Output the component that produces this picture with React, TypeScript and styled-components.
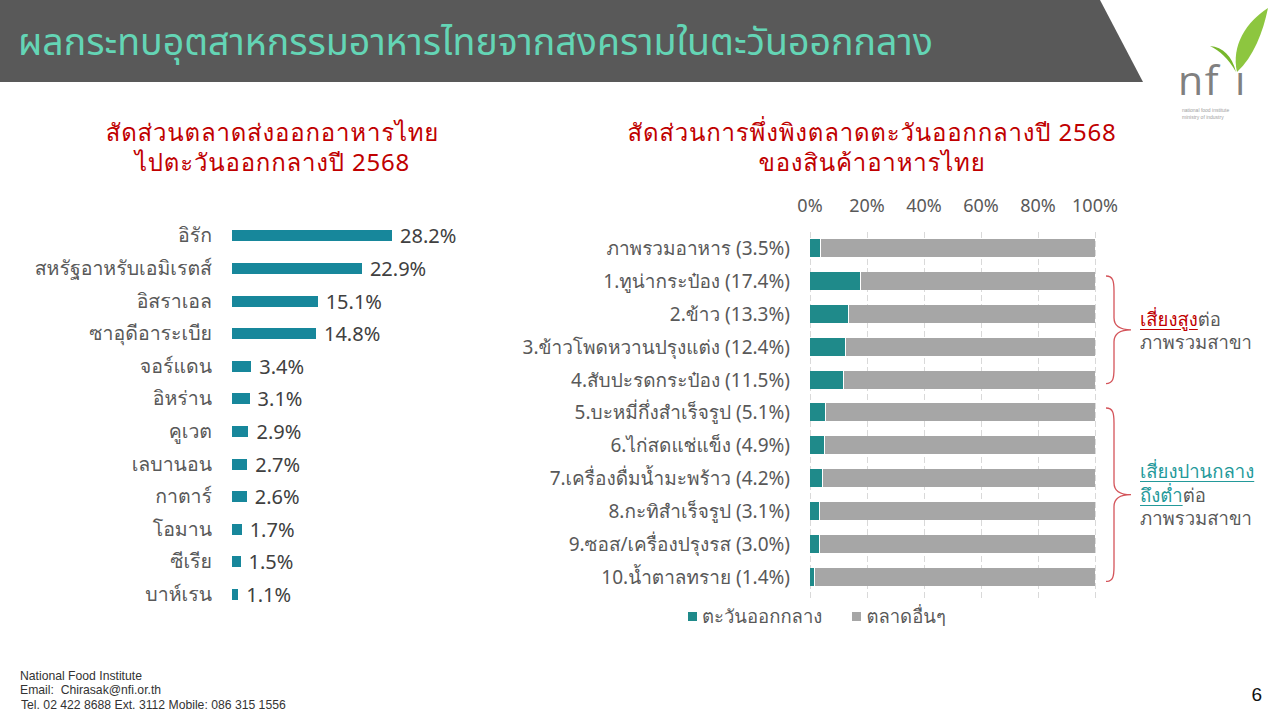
import React from "react";
import styled, { createGlobalStyle } from "styled-components";

const GlobalStyle = createGlobalStyle`
  html, body {
    margin: 0;
    padding: 0;
    background: #fff;
  }
  body {
    font-family: "Noto Sans", Tahoma, Loma, Garuda, Waree, "Noto Sans Thai", "DejaVu Sans", sans-serif;
  }
`;

const exportShare = [
  { name: "อิรัก", value: 28.2 },
  { name: "สหรัฐอาหรับเอมิเรตส์", value: 22.9 },
  { name: "อิสราเอล", value: 15.1 },
  { name: "ซาอุดีอาระเบีย", value: 14.8 },
  { name: "จอร์แดน", value: 3.4 },
  { name: "อิหร่าน", value: 3.1 },
  { name: "คูเวต", value: 2.9 },
  { name: "เลบานอน", value: 2.7 },
  { name: "กาตาร์", value: 2.6 },
  { name: "โอมาน", value: 1.7 },
  { name: "ซีเรีย", value: 1.5 },
  { name: "บาห์เรน", value: 1.1 },
];

const dependency = [
  { name: "ภาพรวมอาหาร", value: 3.5 },
  { name: "1.ทูน่ากระป๋อง", value: 17.4 },
  { name: "2.ข้าว", value: 13.3 },
  { name: "3.ข้าวโพดหวานปรุงแต่ง", value: 12.4 },
  { name: "4.สับปะรดกระป๋อง", value: 11.5 },
  { name: "5.บะหมี่กึ่งสำเร็จรูป", value: 5.1 },
  { name: "6.ไก่สดแช่แข็ง", value: 4.9 },
  { name: "7.เครื่องดื่มน้ำมะพร้าว", value: 4.2 },
  { name: "8.กะทิสำเร็จรูป", value: 3.1 },
  { name: "9.ซอส/เครื่องปรุงรส", value: 3.0 },
  { name: "10.น้ำตาลทราย", value: 1.4 },
];

const ticks = ["0%", "20%", "40%", "60%", "80%", "100%"];

const LEFT_SCALE = 160 / 28.2;
const PLOT_W = 285;
const ROW_H = 32.9;

const Page = styled.div`
  width: 1280px;
  height: 720px;
  display: flex;
  flex-direction: column;
  overflow: hidden;
  background: #fff;
`;

const TopRow = styled.div`
  display: flex;
  align-items: flex-start;
  height: 112px;
`;

const TitleBand = styled.div`
  width: 1143px;
  height: 82px;
  flex-shrink: 0;
  box-sizing: border-box;
  padding-left: 18px;
  display: flex;
  align-items: center;
  background: #595959;
  clip-path: polygon(0 0, 1100px 0, 100% 100%, 0 100%);
`;

const PageTitle = styled.h1`
  margin: 4px 0 0;
  font-family: "Noto Sans", "Noto Sans Thai", sans-serif;
  font-size: 37.5px;
  font-weight: 400;
  color: #64d5b5;
  white-space: nowrap;
`;

const LogoBox = styled.div`
  margin-left: 27px;
  height: 125px;
`;

const Main = styled.div`
  display: grid;
  grid-template-columns: 545px 1fr;
  padding-top: 5px;
`;

const Panel = styled.div`
  display: flex;
  flex-direction: column;
`;

const ChartTitle = styled.div<{ $width?: number }>`
  width: ${(p) => (p.$width ? `${p.$width}px` : "100%")};
  text-align: center;
  font-size: 24px;
  letter-spacing: 0.8px;
  line-height: 30px;
  color: #c00000;
  white-space: nowrap;
`;

const BarList = styled.div`
  margin-top: 42.7px;
  display: flex;
  flex-direction: column;
`;

const BarRow = styled.div`
  display: grid;
  grid-template-columns: 212px 1fr;
  align-items: center;
  height: 32.6px;
`;

const RowLabel = styled.div`
  justify-self: end;
  font-size: 19.5px;
  color: #595959;
  white-space: nowrap;
`;

const BarTrack = styled.div`
  display: flex;
  align-items: center;
  padding-left: 20px;
`;

const ExportBar = styled.div`
  height: 11px;
  background: #17879b;
`;

const BarValue = styled.span`
  margin-left: 8px;
  font-size: 20px;
  color: #404040;
`;

const AxisRow = styled.div`
  display: flex;
  margin-top: 18px;
  padding-left: ${245 + 20 - 28.5}px;
  height: 20px;
  align-items: center;
`;

const Tick = styled.span`
  width: 57px;
  text-align: center;
  font-size: 18px;
  color: #595959;
`;

const PlotGrid = styled.div`
  display: grid;
  margin-top: 16.5px;
  grid-template-columns: 245px 20px ${PLOT_W}px 10px 28px 7px 1fr;
  grid-template-rows: repeat(11, ${ROW_H}px);
`;

const GridLines = styled.svg`
  grid-column: 3;
  grid-row: 1 / 12;
  overflow: visible;
`;

const PlotLabel = styled.div<{ $row: number }>`
  grid-column: 1;
  grid-row: ${(p) => p.$row};
  align-self: center;
  justify-self: end;
  font-size: 19px;
  color: #595959;
  white-space: nowrap;
`;

const StackBar = styled.div<{ $row: number }>`
  grid-column: 3;
  grid-row: ${(p) => p.$row};
  align-self: center;
  display: flex;
  gap: 1px;
  height: 18px;
`;

const MidEastPart = styled.div`
  background: #1f8a8a;
`;

const OtherPart = styled.div`
  flex: 1;
  background: #a6a6a6;
`;

const BraceCell = styled.div<{ $rows: string }>`
  grid-column: 5;
  grid-row: ${(p) => p.$rows};
  align-self: center;
  display: flex;
`;

const Note = styled.div<{ $rows: string }>`
  grid-column: 7;
  grid-row: ${(p) => p.$rows};
  align-self: center;
  font-size: 18.5px;
  line-height: 23.5px;
  color: #595959;
  white-space: nowrap;
`;

const Mark = styled.span<{ $tone: "high" | "mid" }>`
  color: ${(p) => (p.$tone === "high" ? "#c00000" : "#23999a")};
  text-decoration: underline;
  text-underline-offset: 3px;
`;

const Legend = styled.div`
  display: flex;
  align-items: center;
  margin-top: 12.5px;
  padding-left: 143px;
  height: 22px;
  font-size: 18.5px;
  color: #595959;
`;

const LegendItem = styled.span`
  display: flex;
  align-items: center;
  gap: 5px;
  margin-right: 30px;
`;

const Swatch = styled.span<{ $color: string }>`
  width: 9px;
  height: 9px;
  background: ${(p) => p.$color};
`;

const Footer = styled.div`
  margin-top: auto;
  display: flex;
  justify-content: space-between;
  align-items: flex-end;
  padding: 0 18px 8px 20px;
`;

const Contact = styled.div`
  font-family: "Liberation Sans", Arial, sans-serif;
  font-size: 12.2px;
  line-height: 14.5px;
  color: #333;
`;

const ContactLine = styled.div<{ $indent?: boolean }>`
  padding-left: ${(p) => (p.$indent ? "1px" : "0")};
`;

const PageNo = styled.div`
  font-family: "Liberation Sans", Arial, sans-serif;
  font-size: 19px;
  line-height: 26px;
  margin-bottom: 4px;
  color: #111;
`;

const Logo = () => (
  <svg width="100" height="125" viewBox="0 0 100 125">
    <path d="M67,72 C61,46 76,22 98,8 C93,32 84,56 67,72 Z" fill="#8dc63f" />
    <path d="M66,72 C58,58 50,51 40,46 C53,47 62,56 66,72 Z" fill="#77b72c" />
    <g
      fontFamily="'Open Sans', Lato, sans-serif"
      fontWeight={400}
      fontSize="41"
      fill="#808080"
      style={{ fontVariantLigatures: "none" }}
    >
      <text x="8" y="95" letterSpacing="1.5">
        nf
      </text>
      <text x="65" y="95">
        ı
      </text>
    </g>
    <g fontFamily="Liberation Sans, sans-serif" fontSize="5" fill="#a0a0a0">
      <text x="12" y="112">
        national food institute
      </text>
      <text x="12" y="119">
        ministry of industry
      </text>
    </g>
  </svg>
);

const Brace = ({ height }: { height: number }) => {
  const m = height / 2;
  const d = `M1,1 C8,1 9,6 9,16 L9,${m - 12} C9,${m - 4} 14,${m} 26,${m} C14,${m} 9,${m + 4} 9,${m + 12} L9,${height - 16} C9,${height - 6} 8,${height - 1} 1,${height - 1}`;
  return (
    <svg width="28" height={height}>
      <path d={d} fill="none" stroke="#d4545a" strokeWidth="1.3" />
    </svg>
  );
};

const App: React.FC = () => {
  return (
    <Page>
      <GlobalStyle />
      <TopRow>
        <TitleBand>
          <PageTitle>ผลกระทบอุตสาหกรรมอาหารไทยจากสงครามในตะวันออกกลาง</PageTitle>
        </TitleBand>
        <LogoBox>
          <Logo />
        </LogoBox>
      </TopRow>

      <Main>
        <Panel>
          <ChartTitle>
            สัดส่วนตลาดส่งออกอาหารไทย
            <br />
            ไปตะวันออกกลางปี 2568
          </ChartTitle>
          <BarList>
            {exportShare.map((item) => (
              <BarRow key={item.name}>
                <RowLabel>{item.name}</RowLabel>
                <BarTrack>
                  <ExportBar style={{ width: item.value * LEFT_SCALE }} />
                  <BarValue>{item.value.toFixed(1)}%</BarValue>
                </BarTrack>
              </BarRow>
            ))}
          </BarList>
        </Panel>

        <Panel>
          <ChartTitle $width={654}>
            สัดส่วนการพึ่งพิงตลาดตะวันออกกลางปี 2568
            <br />
            ของสินค้าอาหารไทย
          </ChartTitle>
          <AxisRow>
            {ticks.map((t) => (
              <Tick key={t}>{t}</Tick>
            ))}
          </AxisRow>
          <PlotGrid>
            <GridLines width={PLOT_W} height={ROW_H * 11}>
              {ticks.map((t, i) => (
                <line
                  key={t}
                  x1={i * 57 + 0.5}
                  x2={i * 57 + 0.5}
                  y1={0}
                  y2={ROW_H * 11 + 6}
                  stroke="#d9d9d9"
                  strokeDasharray="6 3"
                />
              ))}
            </GridLines>
            {dependency.map((item, i) => (
              <React.Fragment key={item.name}>
                <PlotLabel $row={i + 1}>
                  {item.name} ({item.value.toFixed(1)}%)
                </PlotLabel>
                <StackBar $row={i + 1}>
                  <MidEastPart style={{ width: (item.value / 100) * PLOT_W }} />
                  <OtherPart />
                </StackBar>
              </React.Fragment>
            ))}
            <BraceCell $rows="2 / 6">
              <Brace height={ROW_H * 4 - 22} />
            </BraceCell>
            <Note $rows="2 / 6">
              <Mark $tone="high">เสี่ยงสูง</Mark>ต่อ
              <br />
              ภาพรวมสาขา
            </Note>
            <BraceCell $rows="6 / 12">
              <Brace height={ROW_H * 6 - 22} />
            </BraceCell>
            <Note $rows="6 / 12">
              <Mark $tone="mid">เสี่ยงปานกลาง</Mark>
              <br />
              <Mark $tone="mid">ถึงต่ำ</Mark>ต่อ
              <br />
              ภาพรวมสาขา
            </Note>
          </PlotGrid>
          <Legend>
            <LegendItem>
              <Swatch $color="#1f8a8a" />
              ตะวันออกกลาง
            </LegendItem>
            <LegendItem>
              <Swatch $color="#a6a6a6" />
              ตลาดอื่นๆ
            </LegendItem>
          </Legend>
        </Panel>
      </Main>

      <Footer>
        <Contact>
          <ContactLine>National Food Institute</ContactLine>
          <ContactLine>Email:&nbsp; Chirasak@nfi.or.th</ContactLine>
          <ContactLine $indent>Tel. 02 422 8688 Ext. 3112 Mobile: 086 315 1556</ContactLine>
        </Contact>
        <PageNo>6</PageNo>
      </Footer>
    </Page>
  );
};

export default App;
